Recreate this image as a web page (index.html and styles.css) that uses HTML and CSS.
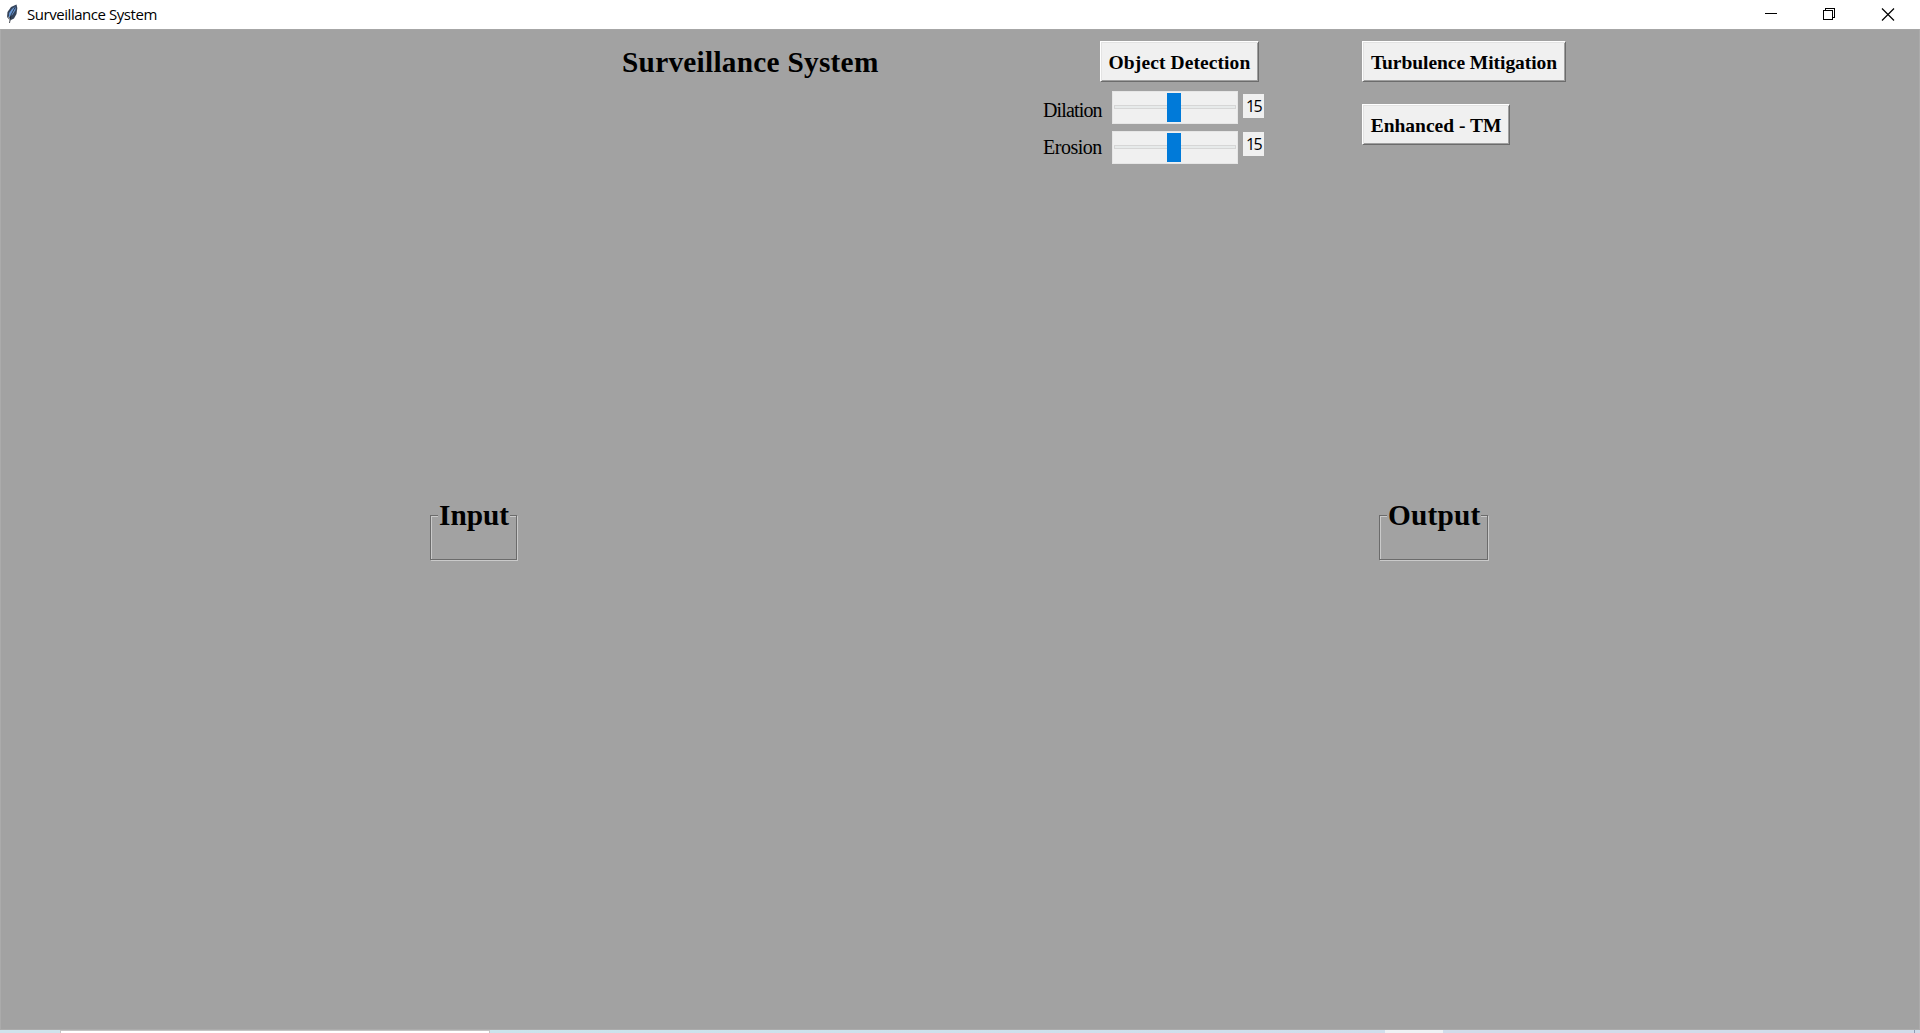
FILE: index.html
```html
<!DOCTYPE html>
<html lang="en">
<head>
<meta charset="utf-8">
<title>Surveillance System</title>
<link rel="stylesheet" href="styles.css">
</head>
<body>
<header class="titlebar">
  <svg class="feather" width="12" height="20" viewBox="0 0 12 20">
    <path d="M10.500.5 11.300 4 10.500 10 8 14.500 4 16.500 1 13 1.500 8 5 3Z" fill="#34435a"/>
    <path d="M9.800 2 6 5 3.200 9 3 13.500 6.500 10.500 9.500 6Z" fill="#6a9bdb"/>
    <path d="M9.500 2.500 5 11 3.500 19" fill="none" stroke="#1b2028" stroke-width=".8"/>
    <path d="M2.200 12.500 4 16" stroke="#aaa" stroke-width="1"/>
  </svg>
  <span class="caption">Surveillance System</span>
  <svg class="controls" width="130" height="13" viewBox="0 0 130 13" fill="none" stroke="#000" shape-rendering="crispEdges">
    <path d="M0 5.5h12"/>
    <path d="M58.500 2.500h9v9h-9zM60.500 2.500v-2h9v9h-2"/>
    <path d="M117 .5 129 12.5M129 .5 117 12.5" stroke-width="1.2" shape-rendering="auto"/>
  </svg>
</header>
<main class="window">
  <section class="toolbar">
    <h1 class="heading"><span>Surveillance System</span></h1>
    <div class="detection">
      <button class="btn btn-detect"><span>Object Detection</span></button>
      <div class="row">
        <label class="name name-dilation">Dilation</label>
        <div class="scale"><div class="trough"></div><div class="thumb"></div></div>
        <output class="value">15</output>
      </div>
      <div class="row row-erosion">
        <label class="name name-erosion">Erosion</label>
        <div class="scale"><div class="trough"></div><div class="thumb"></div></div>
        <output class="value">15</output>
      </div>
    </div>
    <div class="mitigation">
      <button class="btn btn-turbulence"><span>Turbulence Mitigation</span></button>
      <button class="btn btn-enhanced"><span>Enhanced - TM</span></button>
    </div>
  </section>
  <section class="frames">
    <fieldset class="frame frame-input"><legend>Input</legend></fieldset>
    <fieldset class="frame frame-output"><legend>Output</legend></fieldset>
  </section>
</main>
<footer class="desktop"><div class="search"></div><div class="tasks"></div><div class="active"></div><div class="tray"></div><div class="peek"></div></footer>
</body>
</html>
```
FILE: styles.css
```css
* { box-sizing: border-box; }
body {
  margin: 0;
  height: 1033px;
  display: flex;
  flex-direction: column;
  overflow: hidden;
  color: #000;
  font-family: "Liberation Serif", serif;
}
.titlebar {
  height: 29px;
  display: flex;
  align-items: flex-start;
  background: #fff;
  padding: 4px 25px 0 6px;
}
.feather { flex: none; }
.caption {
  margin: 0 0 0 9px;
  font: 15px/20px "Open Sans", sans-serif;
  letter-spacing: -0.45px;
  white-space: nowrap;
}
.controls { margin: 4px 0 0 auto; }
.window {
  flex: 1;
  background: #a2a2a2;
  border: 1px solid #ababab;
  border-top-color: #a6a6a6;
}
.toolbar {
  height: 469px;
  display: flex;
  align-items: flex-start;
  padding: 11px 0 0 621px;
}
.heading {
  width: 421px;
  margin: 4px 0 0;
  font-size: 29.300px;
  line-height: 34px;
  letter-spacing: 0.27px;
  white-space: nowrap;
}
.detection { width: 319px; }
.btn {
  display: flex;
  align-items: center;
  justify-content: center;
  height: 41px;
  padding: 2px 0 0;
  background: #f0f0f0;
  border: 1px solid;
  border-color: #fff #6c6c6c #6c6c6c #fff;
  box-shadow: inset 1px 1px #e3e3e3, inset -1px -1px #a0a0a0;
  border-radius: 0;
  color: #000;
  font: bold 19.500px/24px "Liberation Serif", serif;
  white-space: nowrap;
}
.btn-detect { width: 159px; margin: 0 0 9px 57px; letter-spacing: 0.1px; }
.btn-turbulence { width: 204px; letter-spacing: -0.05px; }
.btn-enhanced { width: 148px; margin-top: 22px; }
.row {
  display: flex;
  align-items: flex-start;
  height: 33px;
}
.row-erosion { margin-top: 7px; }
.name {
  width: 69px;
  font-size: 20px;
  line-height: 24px;
  padding-top: 7px;
}
.name-dilation { letter-spacing: -0.85px; }
.name-erosion { padding-top: 4px; letter-spacing: -0.5px; }
.scale {
  width: 126px;
  height: 33px;
  display: grid;
  align-items: start;
  background: #f0f0f0;
  border: 1px solid #e6e6e6;
}
.trough {
  grid-area: 1 / 1;
  height: 4px;
  margin: 13px 1px 0;
  background: #e7eaea;
  border: 1px solid #d6d6d6;
}
.thumb {
  grid-area: 1 / 1;
  width: 14px;
  height: 29px;
  margin: 1px 0 0 54px;
  background: #007ad9;
}
.value {
  width: 21px;
  height: 24px;
  margin: 3px 0 0 5px;
  background: #f0f0f0;
  font: 16px/24px "Open Sans", sans-serif;
  letter-spacing: -1.6px;
  padding-left: 3px;
}
.row-erosion .value { margin-top: 1px; }
.frames {
  display: flex;
  align-items: flex-start;
  gap: 862px;
  padding-left: 429px;
}
.frame {
  height: 61px;
  margin: 0;
  padding: 0 0 0 7px;
  min-width: 0;
  border: 1px solid #6b6b6b;
  box-shadow: 1px 1px #cacaca, inset 1px 1px #cacaca;
}
.frame-input { width: 87px; }
.frame-output { width: 109px; }
.frame legend {
  padding: 0 1px 0 1px;
  background: #a2a2a2;
  font-weight: bold;
  font-size: 29.300px;
  line-height: 32px;
}
.frame-output legend { letter-spacing: 0.2px; }
.desktop {
  display: flex;
  height: 3px;
  background: #cfe3ec;
}
.search { width: 430px; margin-left: 60px; background: #fff; border: 1px solid #c4c4c4; border-bottom: 0; }
.tasks { width: 895px; background: linear-gradient(90deg, #cbe4ec, #d0deec); }
.active { width: 58px; background: #eff2f5; }
.tray { flex: 1; background: #d1dcea; }
.peek { width: 6px; border-left: 1px solid #8d9db5; background: #d1dcea; }
```
